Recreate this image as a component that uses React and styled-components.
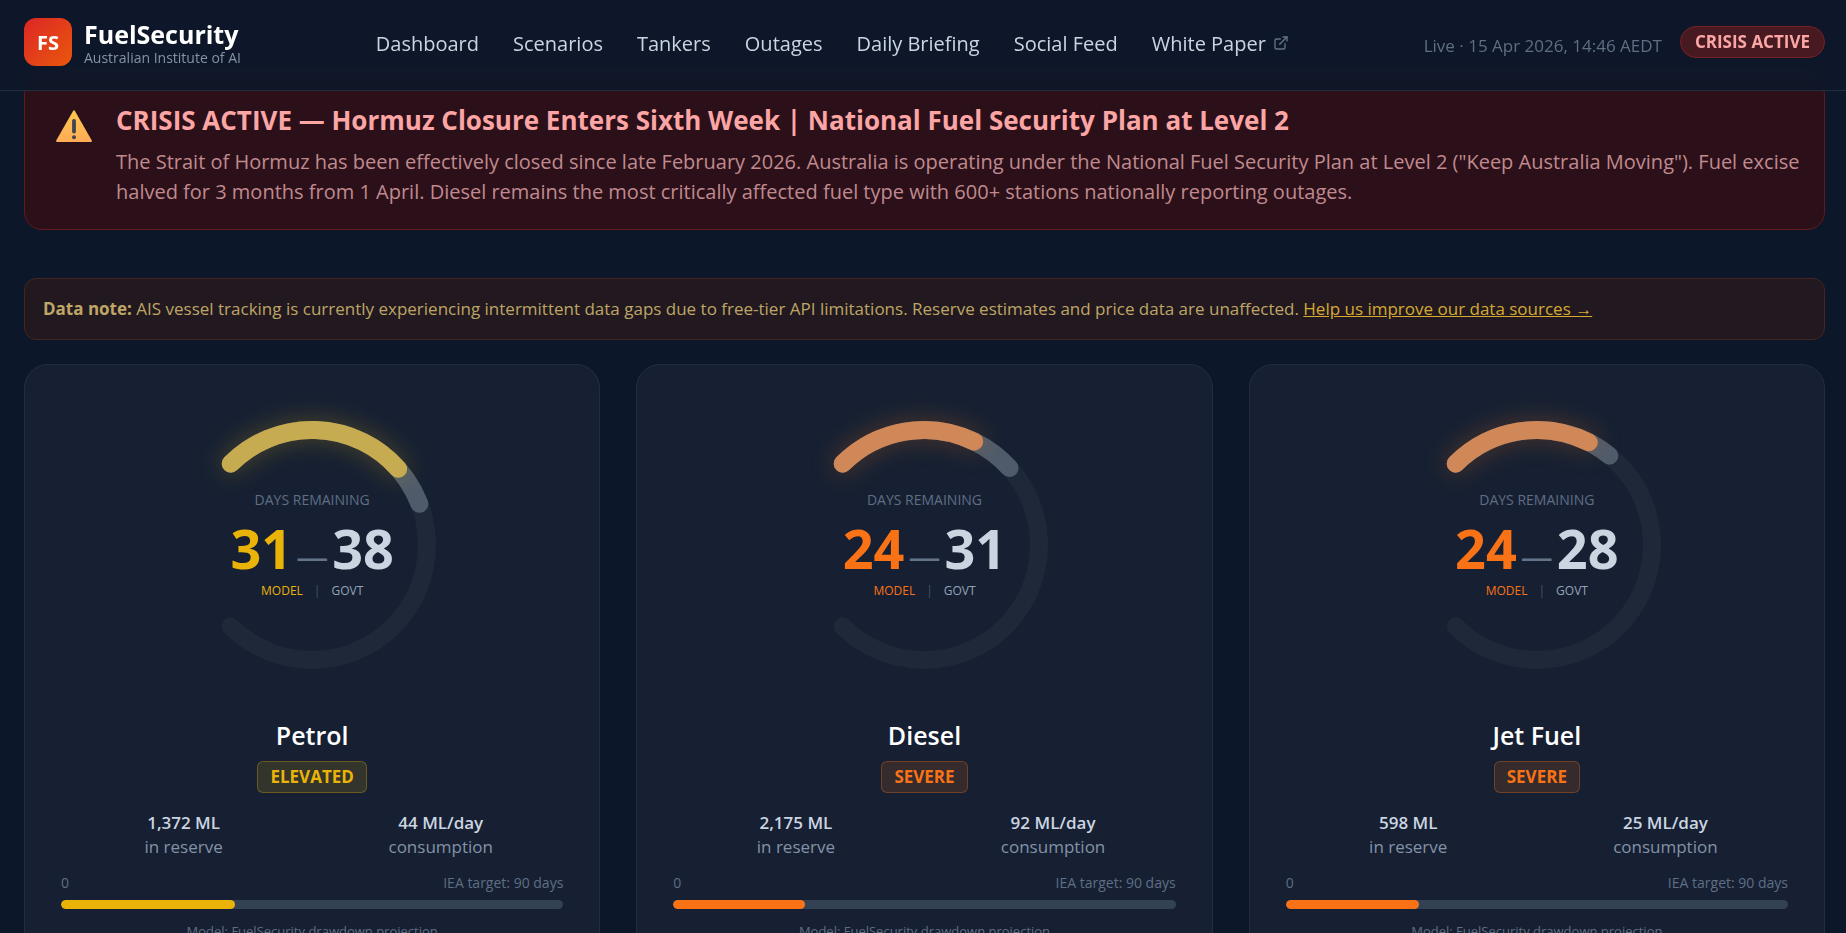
import React from "react";
import styled, { createGlobalStyle } from "styled-components";

import { ExternalLink } from "lucide-react";

const navLinks = [
  "Dashboard",
  "Scenarios",
  "Tankers",
  "Outages",
  "Daily Briefing",
  "Social Feed",
];

const levels = {
  elevated: {
    label: "ELEVATED",
    color: "#eab308",
    arc: "#c6ab50",
    glow: "rgba(234, 179, 8, 0.28)",
    background: "rgba(234, 179, 8, 0.14)",
    border: "rgba(234, 179, 8, 0.3)",
  },
  severe: {
    label: "SEVERE",
    color: "#f97316",
    arc: "#d08858",
    glow: "rgba(249, 115, 22, 0.28)",
    background: "rgba(249, 115, 22, 0.14)",
    border: "rgba(249, 115, 22, 0.3)",
  },
};

const fuels = [
  { name: "Petrol", level: "elevated", reserve: 1372, daily: 44, govt: 38 },
  { name: "Diesel", level: "severe", reserve: 2175, daily: 92, govt: 31 },
  { name: "Jet Fuel", level: "severe", reserve: 598, daily: 25, govt: 28 },
];

const TARGET = 90;
const CENTER = 144;
const RADIUS = 115;

// The dial opens to the left: it starts at -135deg and sweeps 270deg clockwise.
const arcPath = (fraction) => {
  const point = (deg) => {
    const rad = (deg * Math.PI) / 180;
    return `${CENTER + RADIUS * Math.cos(rad)} ${CENTER + RADIUS * Math.sin(rad)}`;
  };
  const sweep = 270 * fraction;
  return `M ${point(-135)} A ${RADIUS} ${RADIUS} 0 ${sweep > 180 ? 1 : 0} 1 ${point(-135 + sweep)}`;
};

const WarningIcon = () => (
  <svg className="warning" width="36" height="32" viewBox="0 0 36 32" aria-hidden="true">
    <defs>
      <linearGradient id="warn" x1="0" y1="0" x2="0" y2="1">
        <stop offset="0" stopColor="#ffc94d" />
        <stop offset="1" stopColor="#ffab57" />
      </linearGradient>
    </defs>
    <path
      d="M17.2 0.8Q18 -0.2 18.8 0.8L35.8 30.6Q36.3 32 35 32H1Q-0.3 32 0.2 30.6Z"
      fill="url(#warn)"
    />
    <rect x="16.1" y="9" width="3.8" height="14.5" rx="1.8" fill="#444451" />
    <circle cx="18" cy="27.2" r="2" fill="#444451" />
  </svg>
);

const FuelCard = ({ name, level, reserve, daily, govt }) => {
  const status = levels[level];
  const days = reserve / daily;

  return (
    <Card>
      <Gauge>
        <svg viewBox="0 0 288 288" aria-hidden="true">
          <path d={arcPath(1)} stroke="#1e2839" />
          <path d={arcPath(govt / TARGET)} stroke="#4f5b6b" />
          <GlowArc d={arcPath(days / TARGET)} stroke={status.arc} $glow={status.glow} />
        </svg>
        <Readout>
          <p className="caption">DAYS REMAINING</p>
          <div className="numbers">
            <Figure $color={status.color}>{Math.round(days)}</Figure>
            <span className="dash">—</span>
            <Figure $color="#cbd5e1">{govt}</Figure>
          </div>
          <Sources $color={status.color}>
            <span className="model">MODEL</span>
            <span className="divider">|</span>
            <span>GOVT</span>
          </Sources>
        </Readout>
      </Gauge>
      <h2>{name}</h2>
      <StatusBadge $status={status}>{status.label}</StatusBadge>
      <Stats>
        <div>
          <strong>{reserve.toLocaleString("en-AU")} ML</strong>
          <span>in reserve</span>
        </div>
        <div>
          <strong>{daily} ML/day</strong>
          <span>consumption</span>
        </div>
      </Stats>
      <Scale>
        <span>0</span>
        <span>IEA target: {TARGET} days</span>
      </Scale>
      <Bar>
        <BarFill $color={status.color} style={{ width: `${(days / TARGET) * 100}%` }} />
      </Bar>
      <Footnote>Model: FuelSecurity drawdown projection</Footnote>
    </Card>
  );
};

const App = () => {
  return (
    <>
      <GlobalStyle />
      <Header>
        <Brand href="#">
          <Logo>FS</Logo>
          <div>
            <p className="name">FuelSecurity</p>
            <p className="owner">Australian Institute of AI</p>
          </div>
        </Brand>
        <Nav>
          {navLinks.map((link) => (
            <a href="#" key={link}>
              {link}
            </a>
          ))}
          <a href="#">
            White Paper
            <ExternalLink className="icon" size={16} />
          </a>
        </Nav>
        <Live>
          <p>Live · 15 Apr 2026, 14:46 AEDT</p>
          <CrisisBadge>CRISIS ACTIVE</CrisisBadge>
        </Live>
      </Header>
      <Main>
        <Banner>
          <WarningIcon />
          <div>
            <h1>
              CRISIS ACTIVE — Hormuz Closure Enters Sixth Week | National Fuel
              Security Plan at Level 2
            </h1>
            <p>
              The Strait of Hormuz has been effectively closed since late
              February 2026. Australia is operating under the National Fuel
              Security Plan at Level 2 ("Keep Australia Moving"). Fuel excise
              halved for 3 months from 1 April. Diesel remains the most
              critically affected fuel type with 600+ stations nationally
              reporting outages.
            </p>
          </div>
        </Banner>
        <Note>
          <strong>Data note:</strong> AIS vessel tracking is currently
          experiencing intermittent data gaps due to free-tier API limitations.
          Reserve estimates and price data are unaffected.{" "}
          <a href="#">Help us improve our data sources →</a>
        </Note>
        <Cards>
          {fuels.map((fuel) => (
            <FuelCard key={fuel.name} {...fuel} />
          ))}
        </Cards>
      </Main>
    </>
  );
};

const GlobalStyle = createGlobalStyle`
  * {
    box-sizing: border-box;
    margin: 0;
    padding: 0;
  }

  html {
    scrollbar-width: none;
  }

  body {
    background: #0d172a;
    color: #cbd5e1;
    font-family: "Open Sans", "Noto Sans", sans-serif;
  }

  a {
    color: inherit;
    text-decoration: none;
  }
`;

const Header = styled.header`
  position: sticky;
  top: 0;
  z-index: 10;
  display: flex;
  align-items: center;
  justify-content: space-between;
  padding: 18px 21px 24px 24px;
  background: rgba(14, 23, 41, 0.85);
  backdrop-filter: blur(12px);
  border-bottom: 1px solid #222d40;
`;

const Brand = styled.a`
  display: flex;
  align-items: center;
  gap: 12px;

  .name {
    color: #ffffff;
    font-size: 25px;
    font-weight: 700;
    line-height: 32px;
  }

  .owner {
    color: #8492a8;
    font-size: 14px;
    line-height: 16px;
  }
`;

const Logo = styled.div`
  width: 48px;
  height: 48px;
  display: flex;
  align-items: center;
  justify-content: center;
  border-radius: 12px;
  background: linear-gradient(135deg, #dc2626, #ea580c);
  color: #ffffff;
  font-size: 20px;
  font-weight: 700;
`;

const Nav = styled.nav`
  display: flex;
  gap: 34px;
  padding-top: 3px;
  font-size: 20px;
  line-height: 30px;

  a {
    display: flex;
    align-items: center;
    gap: 7px;
  }

  .icon {
    margin-bottom: 2px;
    color: #64748b;
  }
`;

const Live = styled.div`
  display: flex;
  align-items: flex-end;
  gap: 18px;

  p {
    color: #5f6e85;
    font-size: 17px;
    line-height: 24px;
  }
`;

const CrisisBadge = styled.span`
  padding: 0 14px;
  border: 1px solid #7a1f24;
  border-radius: 16px;
  background: #471a22;
  color: #fca5a5;
  font-size: 17px;
  font-weight: 700;
  line-height: 30px;
`;

const Main = styled.main`
  padding: 0 21px 48px 24px;
`;

/* Tucked under the sticky header, which blurs its top edge. */
const Banner = styled.section`
  display: flex;
  align-items: flex-start;
  gap: 24px;
  margin-top: -14px;
  padding: 23px 16px 22px 31px;
  border: 1px solid #651820;
  border-radius: 18px;
  background: #2b101a;

  .warning {
    flex-shrink: 0;
    margin-top: 9px;
  }

  h1 {
    margin-bottom: 8px;
    color: #fca5a5;
    font-size: 26px;
    font-weight: 700;
    line-height: 38px;
  }

  p {
    color: #c08a8e;
    font-size: 20px;
    line-height: 30px;
  }
`;

const Note = styled.p`
  margin-top: 48px;
  padding: 17px 18px;
  border: 1px solid #44261f;
  border-radius: 12px;
  background: #21191f;
  color: #bfa566;
  font-size: 17px;
  line-height: 26px;

  a {
    color: #d6a932;
    text-decoration: underline;
  }
`;

const Cards = styled.section`
  display: grid;
  grid-template-columns: repeat(3, 1fr);
  gap: 36px;
  margin-top: 24px;
`;

const Card = styled.article`
  display: flex;
  flex-direction: column;
  align-items: center;
  padding: 36px;
  border: 1px solid #222e40;
  border-radius: 24px;
  background: #162032;

  h2 {
    margin: 28px 0 8px;
    color: #ffffff;
    font-size: 25px;
    font-weight: 600;
    line-height: 36px;
  }
`;

const Gauge = styled.div`
  position: relative;
  width: 288px;
  height: 288px;

  svg {
    display: block;
    overflow: visible;
  }

  path {
    fill: none;
    stroke-width: 18px;
    stroke-linecap: round;
  }
`;

const GlowArc = styled.path`
  filter: drop-shadow(0 0 12px ${(props) => props.$glow});
`;

const Readout = styled.div`
  position: absolute;
  inset: 0;
  display: flex;
  flex-direction: column;
  align-items: center;
  justify-content: center;

  .caption {
    color: #5f6e85;
    font-size: 14px;
    line-height: 20px;
  }

  .numbers {
    display: flex;
    align-items: baseline;
    gap: 4px;
    margin: 8px 0 4px;
    line-height: 60px;
  }

  .dash {
    color: #64748b;
    font-size: 32px;
    line-height: 32px;
  }
`;

const Figure = styled.span`
  color: ${(props) => props.$color};
  font-size: 54px;
  font-weight: 700;
`;

const Sources = styled.div`
  display: flex;
  gap: 11px;
  color: #94a3b8;
  font-size: 12px;
  line-height: 18px;

  .model {
    color: ${(props) => props.$color};
  }

  .divider {
    color: #475569;
  }
`;

const StatusBadge = styled.span`
  padding: 0 12px;
  border: 1px solid ${(props) => props.$status.border};
  border-radius: 6px;
  background: ${(props) => props.$status.background};
  color: ${(props) => props.$status.color};
  font-size: 17px;
  font-weight: 700;
  line-height: 30px;
`;

const Stats = styled.div`
  width: 100%;
  display: grid;
  grid-template-columns: 1fr 1fr;
  gap: 12px;
  margin-top: 18px;
  color: #8492a8;
  font-size: 17px;
  line-height: 24px;
  text-align: center;

  strong,
  span {
    display: block;
  }

  strong {
    color: #cbd5e1;
    font-weight: 600;
  }
`;

const Scale = styled.div`
  width: 100%;
  display: flex;
  justify-content: space-between;
  margin: 14px 0 7px;
  color: #5f6e85;
  font-size: 14px;
  line-height: 20px;
`;

const Bar = styled.div`
  width: 100%;
  height: 9px;
  border-radius: 5px;
  background: #334155;
  overflow: hidden;
`;

const BarFill = styled.div`
  height: 100%;
  border-radius: 5px;
  background: ${(props) => props.$color};
`;

const Footnote = styled.p`
  margin-top: 12px;
  color: #5f6e85;
  font-size: 13px;
  line-height: 20px;
`;

export default App;
